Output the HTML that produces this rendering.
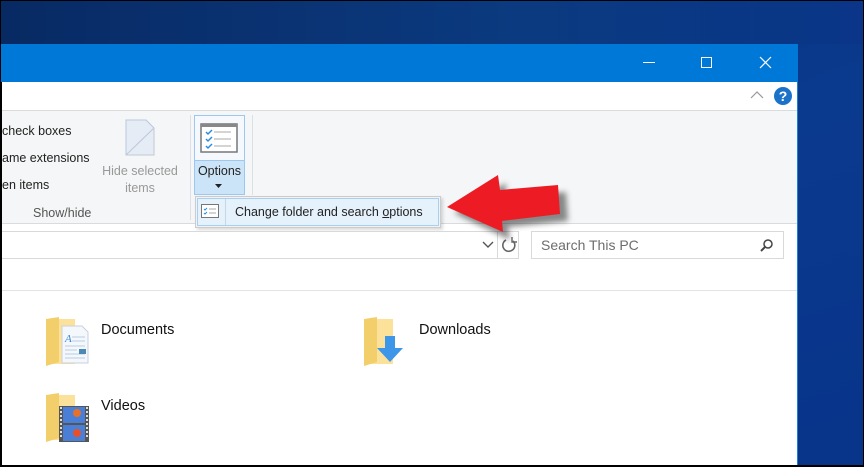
<!DOCTYPE html>
<html><head><meta charset="utf-8"><style>
*{margin:0;padding:0;box-sizing:border-box}
body{width:864px;height:467px;overflow:hidden;position:relative;font-family:"Segoe UI","Liberation Sans","DejaVu Sans",sans-serif;background:linear-gradient(160deg,#0a2c6a 0%,#0a3a8e 50%,#08348a 100%)}
.a{position:absolute}
.t{font-size:12.5px;color:#222;white-space:nowrap}
</style></head><body>
<div class="a" style="left:0;top:0;width:864px;height:44px;background:linear-gradient(90deg,#082a63,#0b3a80 60%,#0a3588)"></div>
<!-- window -->
<div class="a" style="left:0;top:44px;width:798px;height:423px;background:#fff;border-right:1px solid #1a7fd6;border-left:2px solid #000"></div>
<div class="a" style="left:0;top:44px;width:798px;height:38px;background:#0078d7"></div>
<!-- title controls -->
<div class="a" style="left:643px;top:62px;width:12px;height:1px;background:#fff"></div>
<div class="a" style="left:701px;top:57px;width:11px;height:11px;border:1px solid #fff"></div>
<svg class="a" style="left:759px;top:56px" width="13" height="13"><path d="M1 1L12 12M12 1L1 12" stroke="#fff" stroke-width="1.2"/></svg>
<!-- white strip -->
<svg class="a" style="left:750px;top:90px" width="14" height="10"><path d="M1 8L7 2L13 8" stroke="#999" fill="none" stroke-width="1.2"/></svg>
<div class="a" style="left:774px;top:87px;width:18px;height:18px;border-radius:50%;background:#1a73c9;color:#fff;font-weight:bold;font-size:14px;text-align:center;line-height:18px">?</div>
<!-- ribbon -->
<div class="a" style="left:2px;top:110px;width:795px;height:114px;background:#f5f6f7;border-top:1px solid #dadbdc;border-bottom:1px solid #dadbdc"></div>
<div class="a t" style="left:2px;top:124px">check boxes</div>
<div class="a t" style="left:2px;top:151px">ame extensions</div>
<div class="a t" style="left:2px;top:178px">en items</div>
<div class="a t" style="left:33px;top:206px;color:#555">Show/hide</div>
<svg class="a" style="left:125px;top:119px" width="30" height="38"><path d="M1 1H21L29 9V36H1Z" fill="#e6ecf5" stroke="#b9c8dc"/><path d="M1 36L29 9" stroke="#b9c8dc"/><path d="M29 9V36H1" stroke="#c8c8c8" stroke-dasharray="2 1" fill="none"/></svg>
<div class="a t" style="left:100px;top:163px;color:#999;text-align:center;width:80px;line-height:17px">Hide selected<br>items</div>
<div class="a" style="left:190px;top:115px;width:1px;height:105px;background:#dde0e3"></div>
<div class="a" style="left:252px;top:115px;width:1px;height:80px;background:#dde0e3"></div>
<!-- Options button -->
<div class="a" style="left:194px;top:115px;width:51px;height:80px;border:1px solid #9dc7ee;background:#f5f8fc"></div>
<div class="a" style="left:194px;top:160px;width:51px;height:35px;border:1px solid #9dc7ee;background:#cce4f7"></div>
<svg class="a" style="left:200px;top:123px" width="38" height="30"><rect x="1" y="1" width="36" height="28" fill="#fff" stroke="#777" stroke-width="1.5"/><rect x="1" y="1" width="36" height="3" fill="#888"/><path d="M6 9l2 2 4-4M6 16l2 2 4-4M6 23l2 2 4-4" stroke="#2a8ee0" fill="none" stroke-width="1.5"/><path d="M14 9H31M14 16H31M14 23H31" stroke="#aaa"/></svg>
<div class="a t" style="left:194px;top:164px;width:51px;text-align:center">Options</div>
<svg class="a" style="left:215px;top:184px" width="8" height="5"><path d="M0 0H7L3.5 4Z" fill="#222"/></svg>
<!-- menu -->
<div class="a" style="left:195px;top:196px;width:246px;height:32px;background:#f2f2f2;border:1px solid #ccc;box-shadow:2px 2px 3px rgba(0,0,0,.15)"></div>
<div class="a" style="left:197px;top:198px;width:242px;height:28px;background:#e5f1fb;border:1px solid #a8d0f3"></div>
<div class="a" style="left:225px;top:199px;width:1px;height:26px;background:#c6d6e6"></div>
<svg class="a" style="left:201px;top:204px" width="18" height="14"><rect x=".5" y=".5" width="17" height="13" fill="#fff" stroke="#777"/><path d="M3 5l1 1 2-2M3 9l1 1 2-2" stroke="#2a8ee0" fill="none"/><path d="M8 5H15M8 9H15" stroke="#aaa"/></svg>
<div class="a t" style="left:235px;top:205px">Change folder and search <u>o</u>ptions</div>
<!-- address bar -->
<div class="a" style="left:2px;top:231px;width:517px;height:28px;border:1px solid #d9d9d9;border-left:none;background:#fff"></div>
<div class="a" style="left:497px;top:232px;width:1px;height:26px;background:#d9d9d9"></div>
<svg class="a" style="left:482px;top:241px" width="12" height="8"><path d="M1 1L6 6L11 1" stroke="#555" fill="none" stroke-width="1.4"/></svg>
<svg class="a" style="left:500px;top:236px" width="18" height="18"><path d="M13 5A6 6 0 1 1 6 4" stroke="#666" fill="none" stroke-width="1.6"/><path d="M12 1V6H17" stroke="#666" fill="none" stroke-width="1.4"/></svg>
<div class="a" style="left:531px;top:231px;width:253px;height:28px;border:1px solid #d9d9d9;background:#fff"></div>
<div class="a" style="left:541px;top:237px;font-size:14px;color:#6d6d6d">Search This PC</div>
<svg class="a" style="left:760px;top:238px" width="14" height="14"><circle cx="8" cy="6" r="4" stroke="#444" fill="none" stroke-width="1.5"/><path d="M5 9L1 13" stroke="#444" stroke-width="2"/></svg>
<div class="a" style="left:2px;top:290px;width:795px;height:1px;background:#e3e3e3"></div>
<!-- folders -->
<svg class="a" style="left:45px;top:316px" width="46" height="52"><path d="M1 3H30V48H1Z" fill="#fbe19a"/><path d="M1 3L14 1V46L1 50Z" fill="#f3cf6c"/><path d="M17 10H37L43 16V47H17Z" fill="#f4f7fb" stroke="#c8d2dc"/><text x="20" y="26" font-size="11" fill="#3a86d6" font-style="italic" font-family="Liberation Serif">A</text><path d="M27 21H40M27 25H40M20 30H40M20 34H32M20 38H40M20 42H40" stroke="#b8cde0"/><rect x="34" y="33" width="7" height="5" fill="#4a8ab5"/></svg>
<div class="a" style="left:101px;top:322px;font-size:14.5px;color:#111">Documents</div>
<svg class="a" style="left:363px;top:316px" width="46" height="52"><path d="M1 3H30V48H1Z" fill="#fbe19a"/><path d="M1 3L14 1V46L1 50Z" fill="#f3cf6c"/><path d="M22 20H32V32H40L27 46L14 32H22Z" fill="#3d96e8"/></svg>
<div class="a" style="left:419px;top:322px;font-size:14.5px;color:#111">Downloads</div>
<svg class="a" style="left:45px;top:392px" width="46" height="52"><path d="M1 3H30V48H1Z" fill="#fbe19a"/><path d="M1 3L14 1V46L1 50Z" fill="#f3cf6c"/><rect x="14" y="14" width="30" height="36" fill="#555"/><rect x="18" y="15" width="22" height="16" fill="#4a7fd8"/><rect x="18" y="33" width="22" height="16" fill="#4a7fd8"/><circle cx="32" cy="21" r="4" fill="#e7702a"/><circle cx="32" cy="41" r="4" fill="#e7502a"/><path d="M15 16h2M15 20h2M15 24h2M15 28h2M15 32h2M15 36h2M15 40h2M15 44h2M41 16h2M41 20h2M41 24h2M41 28h2M41 32h2M41 36h2M41 40h2M41 44h2" stroke="#ddd" stroke-width="2"/></svg>
<div class="a" style="left:101px;top:398px;font-size:14.5px;color:#111">Videos</div>
<!-- arrow -->
<svg class="a" style="left:440px;top:170px;overflow:visible" width="130" height="70"><defs><filter id="f" x="-20%" y="-20%" width="150%" height="160%"><feGaussianBlur stdDeviation="3"/></filter></defs><polygon points="10,38 62,8 62,22 122,17 124,46 64,52 66,65" fill="rgba(0,0,0,.45)" transform="translate(4,5)" filter="url(#f)"/><polygon points="7,37 58,5 60,20 118,15 120,44 62,51 63,62" fill="#ed1c24"/></svg>
<!-- outer screenshot border -->
<div class="a" style="left:0;top:0;width:864px;height:467px;border:1px solid #000;border-bottom:2px solid #000;pointer-events:none"></div>
</body></html>
